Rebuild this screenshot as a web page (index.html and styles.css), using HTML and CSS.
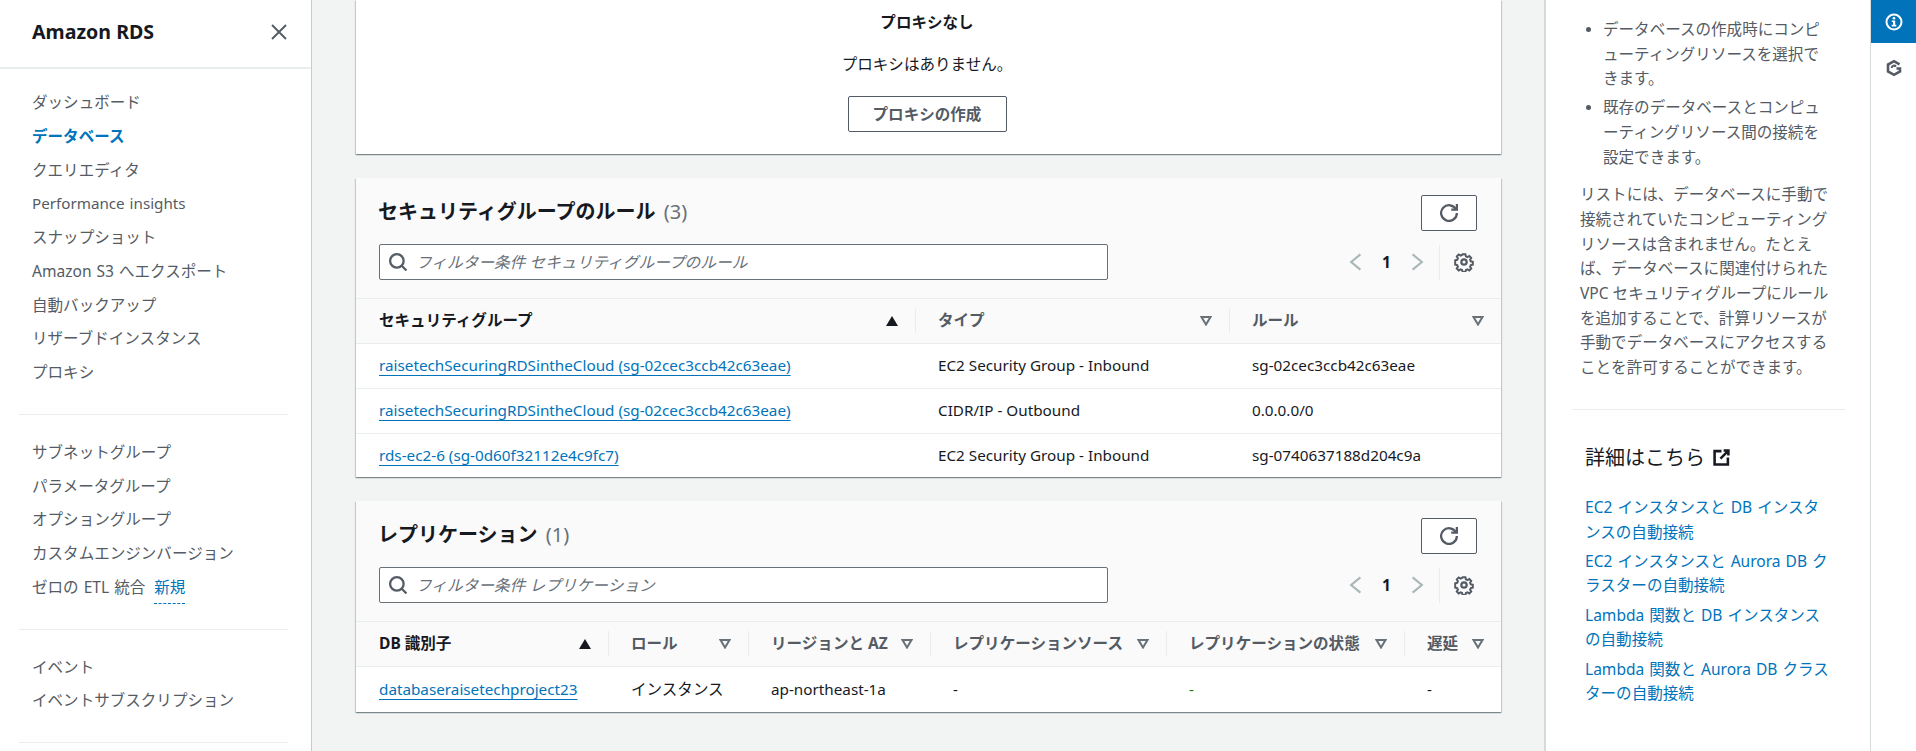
FILE: index.html
```html
<!DOCTYPE html>
<html lang="ja">
<head>
<meta charset="utf-8">
<title>Amazon RDS</title>
<link rel="stylesheet" href="styles.css">
</head>
<body>

<nav class="sidebar">
  <div class="side-head">
    <h2>Amazon RDS</h2>
    <svg class="close" viewBox="0 0 16 16"><path d="M1 1l14 14M15 1L1 15"/></svg>
  </div>
  <ul class="nav first">
    <li>ダッシュボード</li>
    <li class="active">データベース</li>
    <li>クエリエディタ</li>
    <li class="latin">Performance insights</li>
    <li>スナップショット</li>
    <li>Amazon S3 へエクスポート</li>
    <li>自動バックアップ</li>
    <li>リザーブドインスタンス</li>
    <li>プロキシ</li>
  </ul>
  <hr class="side-rule">
  <ul class="nav">
    <li>サブネットグループ</li>
    <li>パラメータグループ</li>
    <li>オプショングループ</li>
    <li>カスタムエンジンバージョン</li>
    <li>ゼロの ETL 統合 <a class="new">新規</a></li>
  </ul>
  <hr class="side-rule">
  <ul class="nav">
    <li>イベント</li>
    <li>イベントサブスクリプション</li>
  </ul>
  <hr class="side-rule">
</nav>

<main class="content">
  <section class="card proxy">
    <b>プロキシなし</b>
    <p>プロキシはありません。</p>
    <button class="btn">プロキシの作成</button>
  </section>

  <section class="card">
    <div class="card-head">
      <div class="title-row">
        <h3>セキュリティグループのルール <span class="count">(3)</span></h3>
        <button class="btn refresh"><svg class="ico" viewBox="0 0 16 16"><path d="M10 5h5V0"/><path d="M15 8a7 7 0 1 1-.7-3"/></svg></button>
      </div>
      <div class="tool-row">
        <div class="filter">
          <svg class="ico search" viewBox="0 0 16 16"><circle cx="7" cy="7" r="6"/><path d="M11.3 11.3l4.2 4.2"/></svg>
          <span>フィルター条件 セキュリティグループのルール</span>
        </div>
        <div class="pager">
          <svg class="chev" viewBox="0 0 12 18"><path d="M10.5 2L2 9l8.500 7"/></svg>
          <span class="page">1</span>
          <svg class="chev" viewBox="0 0 12 18"><path d="M1.500 2L10 9l-8.500 7"/></svg>
          <i class="pager-sep"></i>
          <svg class="ico gear" viewBox="0 0 18 18"><circle cx="9" cy="9" r="2.400"/><path d="M7.600 1.300h2.800l.5 2.100 1.500.7 1.900-1.100 1.900 1.900-1.100 1.900.7 1.500 2 .5v2.800l-2 .5-.7 1.500 1.100 1.900-1.900 1.900-1.900-1.100-1.500.7-.5 2H7.600l-.5-2-1.500-.7-1.900 1.100-1.900-1.900 1.100-1.900-.7-1.500-2-.5V7.300l2-.5.7-1.500-1.100-1.900 1.900-1.900 1.900 1.100 1.500-.7z" transform="translate(0.900 0.900) scale(0.900)"/></svg>
        </div>
      </div>
    </div>
    <table class="grid">
      <colgroup><col class="c-sg"><col class="c-type"><col></colgroup>
      <thead>
        <tr>
          <th class="sorted"><div>セキュリティグループ<svg class="sort" viewBox="0 0 12 10"><path class="up" d="M6 0l6 10H0z"/></svg></div></th>
          <th><div>タイプ<svg class="sort" viewBox="0 0 12 10"><path d="M1.500 1h9L6 8.500z"/></svg></div></th>
          <th class="end"><div>ルール<svg class="sort" viewBox="0 0 12 10"><path d="M1.500 1h9L6 8.500z"/></svg></div></th>
        </tr>
      </thead>
      <tbody>
        <tr><td><a>raisetechSecuringRDSintheCloud (sg-02cec3ccb42c63eae)</a></td><td>EC2 Security Group - Inbound</td><td>sg-02cec3ccb42c63eae</td></tr>
        <tr><td><a>raisetechSecuringRDSintheCloud (sg-02cec3ccb42c63eae)</a></td><td>CIDR/IP - Outbound</td><td>0.0.0.0/0</td></tr>
        <tr><td><a>rds-ec2-6 (sg-0d60f32112e4c9fc7)</a></td><td>EC2 Security Group - Inbound</td><td>sg-0740637188d204c9a</td></tr>
      </tbody>
    </table>
  </section>

  <section class="card">
    <div class="card-head">
      <div class="title-row">
        <h3>レプリケーション <span class="count">(1)</span></h3>
        <button class="btn refresh"><svg class="ico" viewBox="0 0 16 16"><path d="M10 5h5V0"/><path d="M15 8a7 7 0 1 1-.7-3"/></svg></button>
      </div>
      <div class="tool-row">
        <div class="filter">
          <svg class="ico search" viewBox="0 0 16 16"><circle cx="7" cy="7" r="6"/><path d="M11.3 11.3l4.2 4.2"/></svg>
          <span>フィルター条件 レプリケーション</span>
        </div>
        <div class="pager">
          <svg class="chev" viewBox="0 0 12 18"><path d="M10.5 2L2 9l8.500 7"/></svg>
          <span class="page">1</span>
          <svg class="chev" viewBox="0 0 12 18"><path d="M1.500 2L10 9l-8.500 7"/></svg>
          <i class="pager-sep"></i>
          <svg class="ico gear" viewBox="0 0 18 18"><circle cx="9" cy="9" r="2.400"/><path d="M7.600 1.300h2.800l.5 2.100 1.500.7 1.900-1.100 1.900 1.900-1.100 1.900.7 1.500 2 .5v2.800l-2 .5-.7 1.500 1.100 1.900-1.900 1.900-1.900-1.100-1.500.7-.5 2H7.600l-.5-2-1.500-.7-1.900 1.100-1.900-1.900 1.100-1.900-.7-1.500-2-.5V7.300l2-.5.7-1.500-1.100-1.900 1.900-1.900 1.900 1.100 1.500-.7z" transform="translate(0.900 0.900) scale(0.900)"/></svg>
        </div>
      </div>
    </div>
    <table class="grid rep">
      <colgroup><col class="c-db"><col class="c-role"><col class="c-az"><col class="c-src"><col class="c-state"><col></colgroup>
      <thead>
        <tr>
          <th class="sorted"><div>DB 識別子<svg class="sort" viewBox="0 0 12 10"><path class="up" d="M6 0l6 10H0z"/></svg></div></th>
          <th><div>ロール<svg class="sort" viewBox="0 0 12 10"><path d="M1.500 1h9L6 8.500z"/></svg></div></th>
          <th><div>リージョンと AZ<svg class="sort" viewBox="0 0 12 10"><path d="M1.500 1h9L6 8.500z"/></svg></div></th>
          <th><div>レプリケーションソース<svg class="sort" viewBox="0 0 12 10"><path d="M1.500 1h9L6 8.500z"/></svg></div></th>
          <th><div>レプリケーションの状態<svg class="sort" viewBox="0 0 12 10"><path d="M1.500 1h9L6 8.500z"/></svg></div></th>
          <th class="end"><div>遅延<svg class="sort" viewBox="0 0 12 10"><path d="M1.500 1h9L6 8.500z"/></svg></div></th>
        </tr>
      </thead>
      <tbody>
        <tr><td><a>databaseraisetechproject23</a></td><td class="ja">インスタンス</td><td>ap-northeast-1a</td><td>-</td><td class="ok">-</td><td>-</td></tr>
      </tbody>
    </table>
  </section>
</main>

<aside class="help">
  <ul class="help-list">
    <li>データベースの作成時にコンピューティングリソースを選択できます。</li>
    <li>既存のデータベースとコンピューティングリソース間の接続を設定できます。</li>
  </ul>
  <p class="help-text">リストには、データベースに手動で接続されていたコンピューティングリソースは含まれません。たとえば、データベースに関連付けられた VPC セキュリティグループにルールを追加することで、計算リソースが手動でデータベースにアクセスすることを許可することができます。</p>
  <hr class="help-rule">
  <h4>詳細はこちら <svg class="ext" viewBox="0 0 16 16"><path d="M14 8v6.500H1.500V2H8"/><path d="M10 1.500h4.500V6M14.500 1.500L7 9"/></svg></h4>
  <ul class="help-links">
    <li>EC2 インスタンスと DB インスタンスの自動接続</li>
    <li>EC2 インスタンスと Aurora DB クラスターの自動接続</li>
    <li>Lambda 関数と DB インスタンスの自動接続</li>
    <li>Lambda 関数と Aurora DB クラスターの自動接続</li>
  </ul>
</aside>

<div class="rail">
  <div class="rail-tab on">
    <svg viewBox="0 0 18 18"><circle class="ring" cx="9" cy="9" r="7.500"/><circle class="dot" cx="9" cy="5.300" r="1.300"/><path class="dot" d="M6.800 7.500h3.400v4.300h1.100v1.600H6.700v-1.600h1.300V9.100H6.800z"/></svg>
  </div>
  <div class="rail-tab">
    <svg viewBox="0 0 18 18"><path class="hex" d="M14.500 5.400L9 2.200 3 5.600v6.800l6 3.400 6-3.400V9.500h-3.500"/><path class="hex thin" d="M6.700 9A2.400 2.400 0 0 1 11 7.600"/></svg>
  </div>
</div>

</body>
</html>
```

FILE: styles.css
```css
* { box-sizing: border-box; }

html, body { margin: 0; height: 751px; overflow: hidden; }

body {
  display: flex;
  background: #f2f3f3;
  color: #16191f;
  font: 15.55px/24.7px "Noto Sans", "Noto Sans CJK JP", sans-serif;
}

ul { list-style: none; margin: 0; padding: 0; }
h2, h3, h4, p { margin: 0; }

/* left nav */
.sidebar { width: 312px; flex: none; background: #fff; border-right: 1px solid #c6cbcb; height: 751px; overflow: hidden; }
.side-head { height: 69px; padding: 0 24px 0 32px; border-bottom: 2px solid #eaeded; display: flex; align-items: center; justify-content: space-between; }
.side-head h2 { font-size: 19.6px; font-weight: 700; line-height: 28px; margin-top: -3px; }
.close { width: 16px; height: 16px; margin-top: -3px; fill: none; stroke: #545b64; stroke-width: 1.9; }

.nav { color: #545b64; padding-left: 32px; word-spacing: 1px; }
.nav.first { margin-top: 17px; }
.nav li { height: 33.75px; line-height: 33.75px; white-space: nowrap; }
.nav .active { color: #0073bb; font-weight: 700; }
.nav .latin { font-size: 15.2px; }
.new { color: #0073bb; margin-left: 4px; border-bottom: 1px dashed #0073bb; padding-bottom: 5px; }
.side-rule { border: 0; border-top: 1px solid #eaeded; margin: 24px 23px 21px 19px; }

/* center column */
.content { flex: 1; padding: 0 43px 0 44px; min-width: 0; }
.card {
  background: #fff;
  margin-bottom: 24px;
  box-shadow: 0 1px 1px 0 rgba(0,28,36,.3), 1px 1px 1px 0 rgba(0,28,36,.15), -1px 1px 1px 0 rgba(0,28,36,.15);
}
.proxy { height: 154px; padding: 10px 3px 0 0; display: flex; flex-direction: column; align-items: center; }
.proxy b { font-weight: 700; }
.proxy p { margin-top: 17px; }
.btn {
  font: 700 15.55px/24px "Noto Sans", "Noto Sans CJK JP", sans-serif;
  color: #545b64;
  background: #fff;
  border: 1px solid #545b64;
  border-radius: 2px;
  padding: 0;
}
.proxy .btn { width: 159px; height: 36px; margin-top: 20px; }

.card-head { background: #fafafa; height: 121px; padding: 17px 24px 0 23px; border-bottom: 1px solid #eaeded; }
.title-row { display: flex; justify-content: space-between; height: 36px; }
.title-row h3 { font-size: 20px; line-height: 34px; font-weight: 700; margin-left: -1px; word-spacing: 3px; }
.count { font-weight: 400; color: #687078; font-size: 20px; }
.refresh { width: 56px; height: 36px; display: flex; align-items: center; justify-content: center; }

.ico { fill: none; stroke: #545b64; stroke-width: 2; }
.refresh .ico { width: 18px; height: 18px; }

.tool-row { display: flex; justify-content: space-between; margin-top: 13px; }
.filter {
  width: 729px;
  height: 36px;
  background: #fff;
  border: 1px solid #687078;
  border-radius: 2px;
  display: flex;
  align-items: center;
  padding-left: 9px;
  color: #687078;
  font-size: 15.7px;
  font-style: italic;
}
.search { width: 18px; height: 18px; margin-right: 9px; }

.pager { display: flex; align-items: center; height: 36px; margin-right: 3px; }
.chev { width: 13px; height: 20px; fill: none; stroke: #aab7b8; stroke-width: 2; }
.page { width: 49px; text-align: center; font-weight: 700; }
.pager-sep { width: 1px; height: 35px; background: #eaeded; margin: 0 14px 0 15px; }
.gear { width: 20px; height: 20px; }

.grid { width: 100%; table-layout: fixed; border-collapse: collapse; }
.c-sg { width: 560px; }
.c-type { width: 314px; }
.c-db { width: 253px; }
.c-role { width: 140px; }
.c-az { width: 182px; }
.c-src { width: 236px; }
.c-state { width: 238px; }

th { background: #fafafa; height: 44px; padding: 0 0 0 22px; text-align: left; font-weight: 700; color: #545b64; border-bottom: 1px solid #eaeded; white-space: nowrap; }
th:first-child, td:first-child { padding-left: 23px; }
th div { height: 25px; line-height: 25px; display: flex; align-items: center; justify-content: space-between; padding-right: 17px; border-right: 1px solid #eaeded; }
th.end div { border-right: 0; }
th.sorted { color: #16191f; }
.sort { width: 12px; height: 10px; flex: none; fill: none; stroke: #687078; stroke-width: 2; }
.sort .up { fill: #16191f; stroke: none; }

td { height: 45px; padding: 0 0 0 22px; border-bottom: 1px solid #eaeded; white-space: nowrap; font-size: 15.25px; }
td.ja { font-size: 15.55px; }
tr:last-child td { border-bottom: 0; height: 44px; }
.rep tr:last-child td { height: 46px; }
td a { color: #0073bb; text-decoration: underline; text-underline-offset: 4px; text-decoration-thickness: 1px; }
td.ok { color: #1d8102; }

/* right help panel */
.help { width: 327px; flex: none; background: #fff; border-left: 2px solid #d5dbdb; border-right: 1px solid #d5dbdb; padding-top: 17px; color: #545b64; }
.help-list { padding-left: 57px; width: 281px; }
.help-list li { position: relative; margin-bottom: 4px; }
.help-list li::before { content: ""; position: absolute; left: -17px; top: 10px; width: 5px; height: 5px; border-radius: 50%; background: #545b64; }
.help-text { padding: 0 37px 0 34px; margin-top: 13px; }
.help-rule { border: 0; border-top: 1px solid #eaeded; margin: 29px 25px 0 26px; }
.help h4 { font-size: 20px; font-weight: 400; line-height: 28px; color: #16191f; padding-left: 39px; margin-top: 34px; display: flex; align-items: center; gap: 8px; }
.ext { width: 17px; height: 17px; fill: none; stroke: #16191f; stroke-width: 2.4; }
.help-links { color: #0073bb; padding: 0 38px 0 39px; margin-top: 23px; word-spacing: 1px; }
.help-links li { margin-bottom: 4.5px; }

.rail { width: 45px; flex: none; background: #fff; }
.rail-tab { height: 43px; display: flex; align-items: center; justify-content: center; }
.rail-tab svg { width: 18px; height: 18px; }
.rail-tab.on { background: #0073bb; }
.rail-tab:not(.on) { margin-top: 3px; }
.ring { fill: none; stroke: #fff; stroke-width: 2; }
.dot { fill: #fff; }
.hex { fill: none; stroke: #545b64; stroke-width: 2.6; }
.hex.thin { stroke-width: 2; }
```
